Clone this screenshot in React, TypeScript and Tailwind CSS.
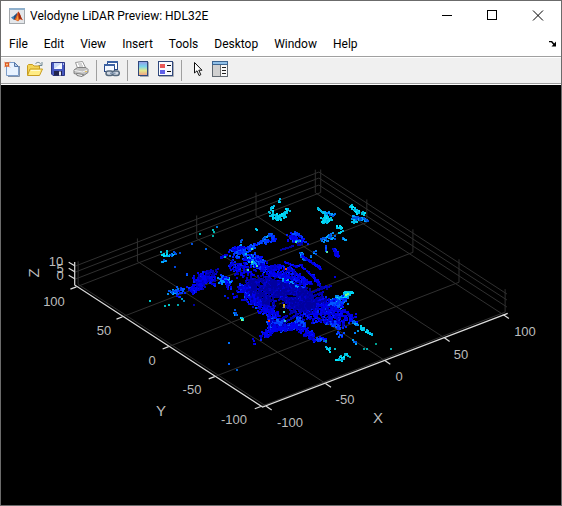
import type { ReactNode } from "react";

type Palette = "dark" | "blue" | "bright" | "sky" | "cyan" | "mixed";

// x1, y1, x2, y2, spread, number of returns, palette
type Streak = [number, number, number, number, number, number, Palette];

const COLORS: Record<Palette, string[]> = {
  dark: ["#0000a0", "#0000b0", "#0000c0", "#0000d0"],
  blue: ["#0000c0", "#0000d8", "#0000f0", "#0008ff", "#0020ff"],
  bright: ["#0008ff", "#0020ff", "#0038ff", "#0058ff"],
  sky: ["#0050e0", "#0070f0", "#0090f0", "#00a8ff"],
  cyan: ["#00b8e8", "#00d0f0", "#00c0d8", "#00e8ff"],
  mixed: ["#0000ff", "#0030ff", "#0068ff", "#0090ff", "#00c0e8"],
};

const STREAKS: Streak[] = [
  // far returns
  [269, 213, 275, 218, 2, 16, "cyan"],
  [275, 219, 284, 216, 2, 34, "cyan"],
  [283, 216, 288, 209, 1, 20, "cyan"],
  [271, 210, 274, 206, 1, 8, "cyan"],
  [277, 222, 278, 219, 1, 4, "cyan"],
  [279, 203, 280, 199, 1, 4, "cyan"],
  [317, 208, 325, 214, 0, 22, "cyan"],
  [323, 221, 330, 219, 2, 36, "cyan"],
  [326, 216, 329, 222, 1, 16, "cyan"],
  [324, 213, 335, 215, 1, 18, "sky"],
  [350, 206, 356, 211, 1, 18, "cyan"],
  [351, 217, 367, 220, 1, 44, "sky"],
  [353, 222, 358, 221, 1, 14, "cyan"],
  [355, 211, 365, 214, 1, 14, "cyan"],
  [337, 227, 344, 230, 1, 16, "cyan"],
  [338, 234, 341, 232, 0, 8, "cyan"],
  [342, 238, 347, 241, 0, 8, "sky"],
  [321, 241, 333, 236, 2, 34, "sky"],
  [256, 229, 257, 230, 0, 2, "cyan"],
  [261, 241, 271, 235, 1, 24, "sky"],
  [263, 242, 275, 240, 1, 28, "bright"],
  [269, 234, 275, 238, 1, 16, "bright"],
  [248, 248, 262, 242, 1, 34, "bright"],
  [289, 238, 305, 242, 2, 70, "blue"],
  [292, 233, 302, 236, 1, 26, "bright"],
  [293, 241, 304, 241, 0, 20, "mixed"],
  [281, 250, 293, 246, 0, 22, "dark"],
  [296, 246, 302, 244, 0, 12, "dark"],
  [326, 246, 326, 253, 0, 12, "bright"],
  [334, 249, 338, 256, 1, 40, "blue"],
  [301, 253, 304, 259, 1, 18, "sky"],
  [302, 256, 321, 269, 0, 54, "blue"],
  [304, 257, 320, 267, 0, 24, "blue"],
  [309, 257, 316, 252, 1, 6, "sky"],
  // curved walls north of the sensor
  [284, 262, 297, 267, 0, 26, "blue"],
  [297, 266, 302, 265, 0, 10, "blue"],
  [302, 267, 313, 276, 0, 28, "blue"],
  [313, 276, 320, 285, 1, 28, "blue"],
  [270, 267, 290, 270, 2, 64, "blue"],
  [288, 268, 302, 278, 1, 52, "blue"],
  [302, 278, 311, 284, 1, 42, "blue"],
  [270, 273, 288, 277, 2, 90, "blue"],
  [286, 275, 306, 285, 2, 84, "blue"],
  [283, 280, 300, 287, 1, 36, "mixed"],
  [258, 263, 274, 275, 3, 90, "blue"],
  // north west clutter
  [220, 258, 227, 255, 1, 16, "blue"],
  [220, 281, 230, 281, 2, 40, "mixed"],
  [226, 277, 229, 288, 2, 28, "blue"],
  [233, 249, 244, 247, 1, 28, "blue"],
  [233, 253, 246, 254, 3, 48, "bright"],
  [236, 252, 253, 248, 2, 40, "bright"],
  [249, 255, 255, 265, 2, 44, "mixed"],
  [255, 257, 264, 269, 3, 90, "bright"],
  [234, 267, 250, 273, 4, 90, "blue"],
  [244, 260, 260, 260, 2, 34, "blue"],
  [239, 247, 241, 241, 1, 6, "sky"],
  [230, 262, 238, 268, 2, 14, "blue"],
  // west arm
  [247, 285, 262, 279, 3, 90, "dark"],
  [239, 288, 251, 292, 3, 80, "blue"],
  [244, 292, 272, 314, 4, 290, "blue"],
  [252, 288, 272, 303, 4, 210, "dark"],
  [242, 286, 268, 310, 3, 60, "bright"],
  [266, 304, 276, 317, 3, 90, "blue"],
  [232, 294, 238, 298, 1, 8, "blue"],
  // dense ring and the spokes around it
  [264, 284, 300, 302, 4, 260, "dark"],
  [268, 284, 308, 294, 4, 260, "dark"],
  [286, 303, 311, 308, 4, 200, "dark"],
  [304, 291, 312, 308, 3, 120, "dark"],
  [266, 282, 306, 302, 5, 70, "blue"],
  [284, 282, 306, 290, 2, 44, "bright"],
  [309, 294, 320, 289, 0, 20, "dark"],
  [311, 297, 324, 292, 0, 22, "dark"],
  [313, 301, 324, 296, 0, 20, "dark"],
  [312, 304, 326, 300, 1, 26, "dark"],
  [319, 289, 332, 286, 1, 20, "dark"],
  [303, 309, 318, 311, 4, 100, "blue"],
  [305, 316, 320, 313, 3, 60, "blue"],
  [290, 313, 299, 307, 0, 14, "dark"],
  [280, 320, 295, 311, 0, 26, "dark"],
  [284, 323, 300, 313, 0, 26, "dark"],
  // south bow
  [263, 337, 277, 327, 2, 120, "blue"],
  [270, 322, 285, 326, 3, 150, "bright"],
  [274, 329, 300, 326, 2, 170, "blue"],
  [278, 329, 302, 324, 2, 70, "bright"],
  [297, 319, 304, 329, 2, 80, "bright"],
  [300, 328, 313, 337, 2, 76, "blue"],
  [270, 321, 272, 329, 2, 46, "blue"],
  // east arm
  [318, 301, 334, 308, 4, 140, "blue"],
  [324, 308, 344, 300, 3, 110, "bright"],
  [329, 304, 346, 296, 2, 50, "sky"],
  [334, 301, 352, 293, 1, 76, "cyan"],
  [344, 294, 353, 292, 1, 24, "cyan"],
  [333, 309, 346, 303, 2, 40, "sky"],
  [321, 314, 334, 309, 2, 50, "blue"],
  [315, 321, 336, 317, 2, 60, "blue"],
  [330, 312, 344, 322, 4, 100, "blue"],
  [339, 310, 354, 319, 3, 50, "blue"],
  [325, 320, 342, 328, 2, 44, "bright"],
  [351, 321, 359, 326, 1, 12, "sky"],
  [361, 327, 372, 335, 1, 26, "cyan"],
  // south east
  [309, 337, 316, 342, 1, 22, "blue"],
  [317, 337, 325, 342, 2, 28, "bright"],
  [337, 332, 345, 339, 1, 9, "bright"],
  [353, 341, 356, 343, 1, 5, "sky"],
  [328, 347, 329, 351, 1, 12, "cyan"],
  [338, 361, 346, 356, 2, 18, "cyan"],
  // south west
  [234, 311, 237, 315, 1, 7, "sky"],
  [239, 319, 243, 319, 1, 8, "cyan"],
  [252, 337, 255, 344, 1, 4, "blue"],
  // west clusters
  [171, 293, 180, 290, 2, 28, "sky"],
  [173, 294, 187, 289, 3, 28, "bright"],
  [190, 291, 203, 285, 2, 84, "blue"],
  [193, 282, 205, 275, 3, 66, "blue"],
  [203, 278, 215, 281, 3, 66, "blue"],
  [205, 274, 216, 272, 2, 34, "dark"],
  [221, 276, 229, 281, 1, 14, "bright"],
  [162, 253, 170, 256, 2, 12, "cyan"],
  [168, 256, 175, 254, 1, 11, "sky"],
  [160, 262, 166, 260, 1, 5, "sky"],
  [191, 245, 193, 243, 0, 3, "sky"],
];

// single returns: x, y, color
const RETURNS: [number, number, string][] = [
  [285, 268, "#ff4800"],
  [268, 320, "#ff3000"],
  [283, 304, "#d8b020"],
  [283, 306, "#a8a030"],
  [283, 311, "#40d0e0"],
  [284, 320, "#30c8d0"],
  [347, 293, "#70ff80"],
  [345, 294, "#90ff70"],
  [241, 319, "#80ff80"],
  [251, 248, "#40f0b0"],
  [295, 241, "#40f0b0"],
  [251, 261, "#50ffb0"],
  [256, 265, "#50e0a0"],
  [326, 251, "#50e0a0"],
  [247, 269, "#40e0b0"],
  [228, 342, "#0070ff"],
  [236, 369, "#0060d0"],
  [228, 363, "#0060ff"],
  [334, 276, "#0000e0"],
  [199, 233, "#00b0a8"],
  [212, 229, "#00c8c0"],
  [213, 231, "#00b8b0"],
  [212, 235, "#00a8a0"],
  [216, 226, "#0070d0"],
  [205, 248, "#0060e0"],
  [149, 300, "#00c0c0"],
  [164, 305, "#00b8c0"],
  [168, 304, "#00c8c8"],
  [177, 304, "#00a8b0"],
  [183, 300, "#0080c0"],
  [181, 298, "#0098c0"],
  [193, 304, "#0000a0"],
  [186, 274, "#0060ff"],
  [186, 273, "#0048ff"],
  [174, 266, "#0048e0"],
  [179, 252, "#0050d0"],
  [224, 256, "#00b0c8"],
  [224, 295, "#0020e0"],
  [227, 297, "#0000d0"],
  [354, 332, "#0080ff"],
  [343, 332, "#0050ff"],
  [375, 343, "#00a090"],
  [390, 348, "#00b0b0"],
  [363, 348, "#00a0a0"],
  [366, 348, "#00b0b0"],
  [334, 348, "#00c0c8"],
  [349, 356, "#00a8a0"],
  [325, 340, "#00a0a0"],
  [357, 330, "#0098e0"],
];

function seeded(seed: number) {
  let s = seed;
  return () => {
    s = (s * 1664525 + 1013904223) % 4294967296;
    return s / 4294967296;
  };
}

function buildCloud() {
  const rand = seeded(32);
  const byColor: Record<string, string> = {};
  const add = (x: number, y: number, color: string) => {
    byColor[color] = (byColor[color] ?? "") + `M${x} ${y}h2v2h-2z`;
  };
  for (const [x1, y1, x2, y2, spread, count, palette] of STREAKS) {
    const colors = COLORS[palette];
    for (let i = 0; i < count; i++) {
      const t = rand();
      const jx = (rand() + rand() - 1) * spread * 2;
      const jy = (rand() + rand() - 1) * spread * 2;
      const color = colors[Math.floor(rand() * colors.length)];
      add(Math.round(x1 + (x2 - x1) * t + jx) - 1, Math.round(y1 + (y2 - y1) * t + jy) - 1, color);
    }
  }
  return Object.entries(byColor);
}

const CLOUD = buildCloud();

const TICKS = [-100, -50, 0, 50, 100];

// screen position on the floor of the axes box
const floor = (x: number, y: number): [number, number] => [
  384.8 + x * 1.186 - (y + 102) * 0.922,
  360.5 - x * 0.458 - (y + 102) * 0.598,
];

const XLIM = 103;
const YLIM = 102;

function Grid() {
  const lines: [[number, number], [number, number]][] = [];
  const up = ([x, y]: [number, number], dz: number): [number, number] => [x, y - dz];
  for (const t of TICKS) {
    lines.push([floor(t, -YLIM), floor(t, YLIM)]);
    lines.push([floor(-XLIM, t), floor(XLIM, t)]);
    lines.push([floor(t, YLIM), up(floor(t, YLIM), 23)]);
    lines.push([floor(XLIM, t), up(floor(XLIM, t), 23)]);
  }
  for (const dz of [6.3, 13.3, 19.3]) {
    lines.push([up(floor(-XLIM, YLIM), dz), up(floor(XLIM, YLIM), dz)]);
    lines.push([up(floor(XLIM, YLIM), dz), up(floor(XLIM, -YLIM), dz)]);
  }
  return (
    <g stroke="#303030" strokeWidth="1">
      {lines.map(([a, b], i) => (
        <line key={i} x1={a[0]} y1={a[1]} x2={b[0]} y2={b[1]} />
      ))}
    </g>
  );
}

function Axes() {
  return (
    <g stroke="#dcdcdc" strokeWidth="1.2" fill="none">
      <path d="M74.7 262V285L262.6 407L507.7 313.4" />
      {TICKS.map((t) => {
        const [x, y] = floor(t, -YLIM);
        return <line key={`x${t}`} x1={x} y1={y} x2={x + 5.5} y2={y + 3.8} />;
      })}
      {TICKS.map((t) => {
        const [x, y] = floor(-XLIM, t);
        return <line key={`y${t}`} x1={x} y1={y} x2={x - 6} y2={y + 2.3} />;
      })}
      {[265.7, 271.7, 278.7].map((y) => (
        <line key={y} x1="74.7" y1={y} x2="68.7" y2={y - 3.5} />
      ))}
    </g>
  );
}

const LABELS: [number, number, string][] = [
  [56, 266, "10"],
  [60, 273, "5"],
  [60, 280, "0"],
  [54, 306, "100"],
  [104, 335, "50"],
  [152, 365, "0"],
  [192, 394, "-50"],
  [234, 424, "-100"],
  [290, 427, "-100"],
  [345, 404, "-50"],
  [399, 381, "0"],
  [461, 359, "50"],
  [525, 336, "100"],
];

function LidarPlot() {
  return (
    <svg viewBox="1 85 560 420" className="block w-full" role="img" aria-label="Point cloud">
      <Grid />
      <g shapeRendering="crispEdges">
        <path d="M260 280L268 278L286 282L308 292L314 299L313 309L300 311L286 303L268 292Z" fill="#0000a4" />
        {CLOUD.map(([color, d]) => (
          <path key={color} d={d} fill={color} />
        ))}
        <path d="M287 295h6v1h3v1h-8v-1h-1zM270 302h2v4h-2zM276 303h3v5h-3zM280 308h5v2h-5z" fill="#000014" />
        {RETURNS.map(([x, y, color]) => (
          <rect key={`${x}-${y}`} x={x} y={y} width="2" height="2" fill={color} />
        ))}
      </g>
      <Axes />
      <g fill="#bcbcbc" fontFamily="'Liberation Sans', Arial, sans-serif" fontSize="13" textAnchor="middle">
        {LABELS.map(([x, y, text]) => (
          <text key={`${x}-${y}`} x={x} y={y}>
            {text}
          </text>
        ))}
        <g fontSize="15">
          <text x="378" y="423">X</text>
          <text x="161" y="416">Y</text>
          <text transform="translate(39 273) rotate(-90)">Z</text>
        </g>
      </g>
    </svg>
  );
}

function Icon({ children }: { children: ReactNode }) {
  return (
    <svg width="16" height="16" viewBox="0 0 16 16" fill="none" aria-hidden="true">
      {children}
    </svg>
  );
}

function MatlabIcon() {
  return (
    <Icon>
      <rect x="0.5" y="0.5" width="15" height="15" fill="#e4e7ea" stroke="#a4a8ac" />
      <rect x="0" y="0" width="16" height="2" fill="#8fb0cc" />
      <path d="M2 9.5L5.5 7.5L8 5.5L7.5 10L5 12Z" fill="#3d7fb5" />
      <path d="M5 8L8.5 4.5L7.5 10L5 12Z" fill="#28507c" />
      <path d="M5 12C7 10.5 8 5 9.3 3.5C11 5 12 10 14 12.3C12 11 10.5 11 9 13.5C8 12.5 7 12 5 12Z" fill="#d9541e" />
      <path d="M9.3 3.5C11 5 12 10 14 12.3C12 11 10.8 10.6 10 11Z" fill="#9c2a12" />
      <path d="M7 12L8.8 7L9.5 12.5Z" fill="#f6a13a" />
    </Icon>
  );
}

function NewIcon() {
  return (
    <Icon>
      <path d="M4 15.5H15.5V5" stroke="#8090a8" />
      <path d="M2.5 1.5H10.5L14.5 5.5V14.5H2.5Z" fill="#e8f2ff" stroke="#7c9cc8" />
      <path d="M10.5 1.5V5.5H14.5Z" fill="#b4ccec" stroke="#5878a8" />
      <path d="M0 0.5L6 6.5M6 0.5L0 6.5" stroke="#f0a070" />
      <rect x="1.5" y="2" width="3" height="3" fill="#ffe8a0" stroke="#e05820" strokeWidth="1.4" />
    </Icon>
  );
}

function OpenIcon() {
  return (
    <Icon>
      <path d="M8.5 3C9.5 1 12.5 0.5 14 3.5M15 1V4.5H11.5" stroke="#6e8793" />
      <path d="M0.5 14V4.5L1.5 3.5H5.5L7 5H12.5V9" fill="#f4d457" stroke="#c89c20" />
      <path d="M0.5 14.5L3 8H15.5L12.5 14.5Z" fill="#ffec84" stroke="#c89c20" />
      <path d="M4 9.5H13" stroke="#fffbd0" />
    </Icon>
  );
}

function SaveIcon() {
  return (
    <Icon>
      <path d="M1.5 1.5H14.5V14.5H3L1.5 13Z" fill="#4658c0" stroke="#2c3585" />
      <rect x="4" y="2" width="8" height="6" fill="#c8d8f8" />
      <path d="M4 8L12 2V8Z" fill="#f4f8ff" />
      <rect x="4" y="10" width="8" height="4.5" fill="#22244c" />
      <rect x="9" y="10.5" width="2" height="4" fill="#e4e8f4" />
      <rect x="13" y="2" width="1" height="2" fill="#b0bcf0" />
    </Icon>
  );
}

function PrintIcon() {
  return (
    <Icon>
      <path d="M4.5 7L2.5 1.5L9.5 0.5L12.5 6.5" fill="#ffffff" stroke="#989898" />
      <path d="M5 3H9M6 5H10" stroke="#a8a8a8" />
      <path d="M1 9L4.5 6.5H13L15 8.5V11.5L10 15L1 12.5Z" fill="#c0c0c0" stroke="#808080" />
      <path d="M1.5 9.5L9.5 11L14.5 9" stroke="#f2f2f2" />
      <path d="M3.5 12.5L10.5 13.5L9 15.5L4 14.5Z" fill="#ffffff" stroke="#7a7a7a" />
      <rect x="12" y="10" width="2" height="1" fill="#e8c060" />
    </Icon>
  );
}

function LinkIcon() {
  return (
    <Icon>
      <rect x="3.5" y="0.5" width="10" height="8" fill="#ffffff" stroke="#284888" />
      <rect x="3" y="0" width="11" height="2" fill="#3c62a4" />
      <rect x="0.5" y="3.5" width="10" height="7" fill="#f4f8ff" stroke="#284888" />
      <rect x="0" y="3" width="11" height="2" fill="#3c62a4" />
      <rect x="2" y="10" width="7" height="4.5" rx="2.2" fill="#d0d8e4" stroke="#54687c" strokeWidth="1.5" />
      <rect x="8.3" y="10" width="7" height="4.5" rx="2.2" fill="#d0d8e4" stroke="#54687c" strokeWidth="1.5" />
      <path d="M6 12.3H11.5" stroke="#8498b0" strokeWidth="1.5" />
    </Icon>
  );
}

function ColorbarIcon() {
  return (
    <Icon>
      <defs>
        <linearGradient id="colorbar" x1="0" y1="0" x2="0" y2="1">
          <stop offset="0" stopColor="#9898e8" />
          <stop offset="0.35" stopColor="#78d4ec" />
          <stop offset="0.65" stopColor="#e4e88c" />
          <stop offset="1" stopColor="#f09c84" />
        </linearGradient>
      </defs>
      <path d="M5 15.5H13.5V1" stroke="#a8acb4" />
      <rect x="3.5" y="0.5" width="9" height="14" fill="url(#colorbar)" stroke="#30487c" />
    </Icon>
  );
}

function LegendIcon() {
  return (
    <Icon>
      <path d="M1 15.5H15.5V1" stroke="#a8acb4" />
      <rect x="0.5" y="0.5" width="14" height="14" fill="#f8faff" stroke="#30487c" />
      <rect x="2" y="3" width="5" height="4" fill="#e85858" />
      <rect x="2" y="9" width="5" height="4" fill="#6060e8" />
      <path d="M9 4.5H13M9 10.5H13" stroke="#101010" />
    </Icon>
  );
}

function PointerIcon() {
  return (
    <Icon>
      <path d="M5.5 1.5V12L8 9.8L10 14.5L11.8 13.7L9.8 9.2H13Z" fill="#ffffff" stroke="#101010" />
    </Icon>
  );
}

function InspectorIcon() {
  return (
    <Icon>
      <rect x="0.5" y="0.5" width="15" height="15" fill="#d0d0d0" stroke="#606870" />
      <rect x="0" y="0" width="16" height="4" fill="#3c6490" />
      <rect x="1" y="1" width="14" height="2" fill="#90c0e8" />
      <rect x="9" y="4" width="6" height="11" fill="#f8f8f8" />
      <path d="M8.5 4V15" stroke="#707070" />
      <path d="M10 6.5H14M10 9.5H14M10 12.5H14" stroke="#202020" />
    </Icon>
  );
}

function ToolButton({ label, children }: { label: string; children: ReactNode }) {
  return (
    <button
      type="button"
      aria-label={label}
      title={label}
      className="flex h-[22px] w-[23px] shrink-0 items-center pl-[3px] hover:bg-sky-100"
    >
      {children}
    </button>
  );
}

function Divider() {
  return <span className="mt-0.5 mr-1 ml-[3px] h-[21px] w-px shrink-0 bg-[#a0a0a0]" />;
}

function WindowButton({ label, children }: { label: string; children: ReactNode }) {
  return (
    <button
      type="button"
      aria-label={label}
      className="flex w-[46px] items-center justify-center self-stretch hover:bg-gray-200"
    >
      <svg width="12" height="11" viewBox="0 0 12 11" fill="none" stroke="#000000" aria-hidden="true">
        {children}
      </svg>
    </button>
  );
}

const MENUS = ["File", "Edit", "View", "Insert", "Tools", "Desktop", "Window", "Help"];

export default function App() {
  return (
    <div className="flex min-h-screen flex-col border border-[#6b6b6b] bg-black font-[Roboto,'Noto_Sans',sans-serif] text-[12px] text-black">
      <header className="flex h-[29px] items-center bg-white pl-2">
        <MatlabIcon />
        <h1 className="ml-[5px] flex-1 truncate">Velodyne LiDAR Preview: HDL32E</h1>
        <WindowButton label="Minimize">
          <path d="M2 5.5H12" />
        </WindowButton>
        <WindowButton label="Maximize">
          <rect x="1.5" y="0.5" width="9" height="9" />
        </WindowButton>
        <WindowButton label="Close">
          <path d="M1 0.5L11 10.5M11 0.5L1 10.5" />
        </WindowButton>
      </header>

      <nav className="flex h-[26px] items-center bg-white pt-0.5">
        {MENUS.map((menu) => (
          <button key={menu} type="button" className="px-2 hover:bg-sky-100">
            {menu}
          </button>
        ))}
        <button type="button" aria-label="Dock figure" className="mr-1 ml-auto">
          <svg width="8" height="6" viewBox="0 0 8 6" fill="none" stroke="#000000" aria-hidden="true">
            <path d="M0 0.5H2.5L5.5 4" strokeWidth="1.5" />
            <path d="M7 0.5V5.5H2.5Z" fill="#000000" stroke="none" />
          </svg>
        </button>
      </nav>

      <div className="border-y border-[#a0a0a0]">
        <div className="flex h-[26px] items-start border-t border-white bg-[#f0f0f0]">
          <ToolButton label="New Figure"><NewIcon /></ToolButton>
          <ToolButton label="Open File"><OpenIcon /></ToolButton>
          <ToolButton label="Save Figure"><SaveIcon /></ToolButton>
          <ToolButton label="Print Figure"><PrintIcon /></ToolButton>
          <Divider />
          <ToolButton label="Link Plot"><LinkIcon /></ToolButton>
          <Divider />
          <ToolButton label="Insert Colorbar"><ColorbarIcon /></ToolButton>
          <ToolButton label="Insert Legend"><LegendIcon /></ToolButton>
          <Divider />
          <ToolButton label="Edit Plot"><PointerIcon /></ToolButton>
          <ToolButton label="Open Property Inspector"><InspectorIcon /></ToolButton>
        </div>
      </div>

      <main className="flex-1 border-t border-white">
        <LidarPlot />
      </main>
    </div>
  );
}
